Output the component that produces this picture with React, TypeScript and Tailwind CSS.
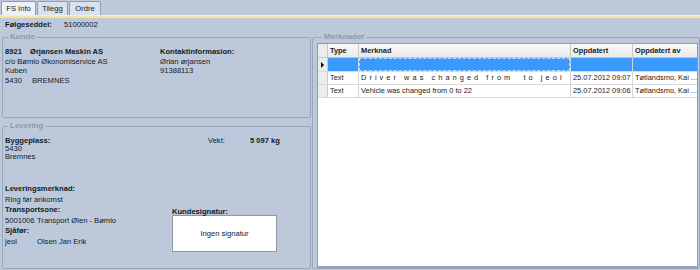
import React from "react";

const COLS = "grid grid-cols-[10px_31px_212px_62px_1fr]";

function GroupBox({ title, className, children }: { title: string; className?: string; children?: React.ReactNode }) {
  return (
    <fieldset className={`border border-[#9aa7ba] rounded-[2px] ${className ?? ""}`}>
      <legend className="ml-[5px] px-[2px] leading-[10px] font-bold text-[#8d98a9] text-[8px]">{title}</legend>
      {children}
    </fieldset>
  );
}

function Tab({ label, active, w }: { label: string; active?: boolean; w: string }) {
  return (
    <div
      className={`${w} h-[14px] flex items-center justify-center border border-b-0 border-[#8e9eb5] rounded-t-[2px] ${
        active ? "bg-[#eef2f7]" : "bg-[#d9e1ec]"
      }`}
    >
      {label}
    </div>
  );
}

const rows = [
  { type: "", merknad: "", dato: "", av: "", selected: true },
  { type: "Text", merknad: "Driver was changed from  to jeol", dato: "25.07.2012 09:07", av: "Tøtlandsmo, Kai ...", spaced: true },
  { type: "Text", merknad: "Vehicle was changed from 0 to 22", dato: "25.07.2012 09:06", av: "Tøtlandsmo, Kai ..." },
];

export default function App() {
  return (
    <div className="w-[700px] h-[270px] overflow-hidden flex flex-col bg-[#bdc9da] text-[#111a26] text-[7.6px] font-['Liberation_Sans',Arial,sans-serif]">
      {/* faner */}
      <div className="h-[15px] flex items-end gap-[1px] pl-[1px]">
        <Tab label="FS Info" active w="w-[35px]" />
        <Tab label="Tilegg" w="w-[31px]" />
        <Tab label="Ordre" w="w-[32px]" />
      </div>
      <div className="h-[3px] bg-[#f8e49b] border-t border-[#fbefc3]" />

      {/* følgeseddel */}
      <div className="h-[14px] flex items-center pl-[5px]">
        <span className="font-bold w-[59px]">Følgeseddel:</span>
        <span>51000002</span>
      </div>

      <div className="flex flex-1 min-h-0">
        {/* venstre side */}
        <div className="ml-[2px] w-[309px] flex flex-col gap-[3px]">
          <GroupBox title="Kunde" className="h-[86px]">
            <div className="grid grid-cols-[155px_1fr] pl-[2px] pt-[5px] leading-[9.5px]">
              <div>
                <div className="font-bold">
                  <span className="inline-block w-[25px]">8921</span>Ørjansen Maskin AS
                </div>
                <div>c/o Bømlo Økonomiservice AS</div>
                <div>Kuben</div>
                <div>
                  <span className="inline-block w-[27px]">5430</span>BREMNES
                </div>
              </div>
              <div>
                <div className="font-bold">Kontaktinformasion:</div>
                <div>Ørian ørjansen</div>
                <div>91388113</div>
              </div>
            </div>
          </GroupBox>

          <GroupBox title="Levering" className="flex-1 mb-[1px]">
            <div className="pl-[2px] pt-[6px]">
              <div className="flex leading-[8px]">
                <div className="w-[203px]">
                  <div className="font-bold">Byggeplass:</div>
                  <div>5430</div>
                  <div>Bremnes</div>
                </div>
                <div className="w-[42px]">Vekt:</div>
                <div className="font-bold">5 097 kg</div>
              </div>

              <div className="flex mt-[23px]">
                <div className="w-[167px] leading-[10.5px]">
                  <div className="font-bold">Leveringsmerknad:</div>
                  <div>Ring før ankomst</div>
                  <div className="font-bold">Transportsone:</div>
                  <div>
                    <span className="inline-block w-[32px]">5001006</span>Transport Ølen - Bømlo
                  </div>
                  <div className="font-bold">Sjåfør:</div>
                  <div>
                    <span className="inline-block w-[32px]">jeol</span>Olsen Jan Erik
                  </div>
                </div>
                <div className="mt-[24px]">
                  <div className="font-bold leading-[7px]">Kundesignatur:</div>
                  <div className="w-[105px] h-[37px] bg-white border border-[#8f99a6] flex items-center justify-center">
                    Ingen signatur
                  </div>
                </div>
              </div>
            </div>
          </GroupBox>
        </div>

        {/* merknader */}
        <GroupBox title="Merknader" className="ml-[1px] flex-1 flex flex-col mb-[1px] pl-[4px]">
          <div className="mt-[1px] mr-[1px] h-[226px] bg-white border border-[#8c9bb1] border-b-2 border-b-[#98a6ba] text-[7.4px] text-[#1b1b1b]">
            <div className={`${COLS} h-[14px] bg-gradient-to-b from-[#f9f9f9] to-[#e9e9e9] border-b border-[#c4c4c4] font-bold`}>
              <div className="border-r border-[#c9c9c9] bg-[#ececec]" />
              <div className="border-r border-[#c9c9c9] pl-[2px] flex items-center">Type</div>
              <div className="border-r border-[#c9c9c9] pl-[2px] flex items-center">Merknad</div>
              <div className="border-r border-[#c9c9c9] pl-[2px] flex items-center">Oppdatert</div>
              <div className="pl-[2px] flex items-center">Oppdatert av</div>
            </div>
            {rows.map((r, i) => (
              <div
                key={i}
                className={`${COLS} ${i < 1 ? "h-[14px]" : "h-[13px]"} border-b border-[#dadada] ${
                  r.selected ? "bg-[#3a99fd]" : ""
                }`}
              >
                <div className="bg-[#ececec] border-r border-[#c9c9c9] flex items-center justify-center">
                  {r.selected && (
                    <span className="w-0 h-0 border-y-[3px] border-y-transparent border-l-[3px] border-l-black" />
                  )}
                </div>
                <div className="border-r border-[#d6d6d6] pl-[2px] flex items-center">{r.type}</div>
                <div className="border-r border-[#d6d6d6] flex items-center overflow-hidden">
                  {r.selected ? (
                    <div className="w-full h-full border border-dashed border-[#b9dcff]" />
                  ) : (
                    <span className={`pl-[2px] whitespace-pre ${r.spaced ? "tracking-[3.05px]" : ""}`}>{r.merknad}</span>
                  )}
                </div>
                <div className="border-r border-[#d6d6d6] pl-[2px] flex items-center">{r.dato}</div>
                <div className="pl-[2px] flex items-center whitespace-nowrap overflow-hidden">{r.av}</div>
              </div>
            ))}
          </div>
        </GroupBox>
      </div>
    </div>
  );
}
